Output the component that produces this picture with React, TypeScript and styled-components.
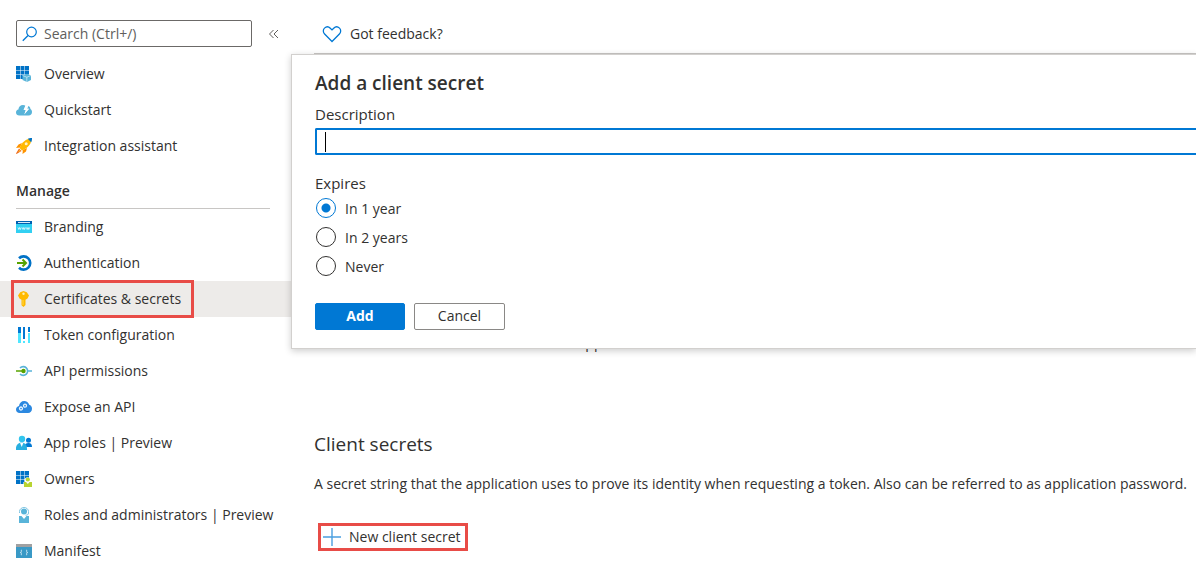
import React from "react";
import styled, { createGlobalStyle } from "styled-components";

const GlobalStyle = createGlobalStyle`
  *, *::before, *::after { box-sizing: border-box; }
  body { margin: 0; background: #fff; color: #323130; }
  body, button, input {
    font-family: "Open Sans", "Noto Sans", sans-serif;
    font-size: 14px;
    line-height: 20px;
  }
`;

const Page = styled.div`
  display: flex;
  height: 100vh;
  overflow: hidden;
`;

const Sidebar = styled.nav`
  flex: 0 0 291px;
  display: flex;
  flex-direction: column;
`;

const SearchRow = styled.div`
  flex: none;
  display: flex;
  align-items: center;
  gap: 16px;
  padding: 20px 12px 9px 16px;
`;

const SearchBox = styled.label`
  flex: 0 0 236px;
  display: flex;
  align-items: center;
  gap: 6px;
  height: 27px;
  padding: 0 5px;
  border: 1px solid #6b6967;
  border-radius: 2px;
`;

const SearchInput = styled.input`
  flex: 1;
  min-width: 0;
  padding: 0;
  border: 0;
  outline: 0;
  background: none;
  color: #323130;
  &::placeholder { color: #605e5c; opacity: 1; }
`;

const IconButton = styled.button`
  display: flex;
  padding: 0;
  border: 0;
  background: none;
`;

const NavList = styled.ul`
  flex: none;
  margin: 0;
  padding: 0;
  list-style: none;
`;

const NavLink = styled.a<{ $selected?: boolean }>`
  display: flex;
  align-items: center;
  height: 36px;
  padding-left: 11px;
  color: inherit;
  text-decoration: none;
  white-space: nowrap;
  background: ${(p) => (p.$selected ? "#edebe9" : "transparent")};
`;

const NavContent = styled.span<{ $marked?: boolean }>`
  display: flex;
  align-items: center;
  gap: 12px;
  height: 38px;
  padding: 0 10px 0 2px;
  border: 3px solid ${(p) => (p.$marked ? "#e84c47" : "transparent")};
`;

const GroupTitle = styled.h2`
  flex: none;
  margin: 14px 22px 0 16px;
  padding: 3px 0 7px;
  border-bottom: 1px solid #c8c6c4;
  font-size: 14px;
  line-height: 20px;
  font-weight: 600;
`;

const Main = styled.main`
  position: relative;
  flex: 1;
  min-width: 0;
  margin-left: -1px;
  padding-left: 23px;
`;

const Toolbar = styled.div`
  display: flex;
  height: 54px;
  padding: 14px 8px 0;
  border-bottom: 1px solid #c8c6c4;
`;

const Command = styled.button<{ $marked?: boolean }>`
  display: flex;
  align-items: center;
  gap: 8px;
  height: ${(p) => (p.$marked ? "28px" : "40px")};
  margin-left: ${(p) => (p.$marked ? "4px" : "0")};
  padding: ${(p) => (p.$marked ? "0 4px 0 2px" : "0")};
  border: ${(p) => (p.$marked ? "3px solid #e84c47" : "0")};
  background: none;
  color: inherit;
`;

const EmptyNote = styled.p`
  margin: 0;
  padding-top: 279px;
`;

const SectionTitle = styled.h2`
  margin: 77px 0 0;
  font-size: 19px;
  line-height: 28px;
  font-weight: 400;
`;

const Intro = styled.p`
  margin: 16px 0 29px;
  white-space: nowrap;
`;

const Panel = styled.form`
  position: absolute;
  top: 54px;
  left: 0;
  right: 0;
  padding: 16px 0 18px 23px;
  border: 1px solid #d2d0ce;
  border-right: 0;
  background: #fff;
  box-shadow: 0 2px 7px rgba(0, 0, 0, 0.2);
`;

const PanelTitle = styled.h2`
  margin: 0;
  font-size: 19px;
  line-height: 24px;
  font-weight: 600;
`;

const FieldLabel = styled.label`
  display: block;
  margin: 9px 0 4px;
  font-size: 15px;
`;

const TextField = styled.div`
  display: flex;
  align-items: center;
  height: 27px;
  padding-left: 8px;
  border: 2px solid #0078d4;
  border-right: 0;
  border-radius: 2px 0 0 2px;
`;

const Caret = styled.span`
  width: 1px;
  height: 20px;
  background: #000;
`;

const TextInput = styled.input`
  flex: 1;
  min-width: 0;
  padding: 0;
  border: 0;
  outline: 0;
  background: none;
  color: #323130;
`;

const Options = styled.fieldset`
  margin: 18px 0 0;
  padding: 0;
  border: 0;
`;

const Legend = styled.legend`
  padding: 0 0 1px;
  font-size: 15px;
`;

const Option = styled.label`
  display: flex;
  align-items: center;
  gap: 9px;
  height: 29px;
`;

const Radio = styled.input`
  appearance: none;
  width: 20px;
  height: 20px;
  margin: 0 0 2px 1px;
  border: 1px solid #323130;
  border-radius: 50%;
  &:checked {
    border-color: #0078d4;
    background: radial-gradient(circle, #0078d4 4px, transparent 5px);
  }
`;

const Actions = styled.div`
  display: flex;
  gap: 9px;
  margin-top: 22px;
`;

const ActionButton = styled.button<{ $primary?: boolean }>`
  width: ${(p) => (p.$primary ? "90px" : "91px")};
  height: 27px;
  padding: 0 0 2px;
  border: 1px solid ${(p) => (p.$primary ? "#0078d4" : "#8a8886")};
  border-radius: 2px;
  background: ${(p) => (p.$primary ? "#0078d4" : "#fff")};
  color: ${(p) => (p.$primary ? "#fff" : "#323130")};
  font-weight: ${(p) => (p.$primary ? 700 : 400)};
`;

const Icon = ({ size = 16, children }: { size?: number; children: React.ReactNode }) => (
  <svg width={size} height={size} viewBox={`0 0 ${size} ${size}`} fill="none" aria-hidden="true">
    {children}
  </svg>
);

const gridPath =
  "M0 0h4v4H0zM4.5 0h4v4h-4zM9 0h4v4H9zM0 4.500h4v4H0zM4.500 4.500h4v4h-4zM9 4.500h4v4H9zM0 9h4v4H0zM4.500 9h4v4h-4z";

const icons = {
  overview: (
    <Icon>
      <path d={gridPath} fill="#0072c6" />
      <path d="M6.500 9.500l4.500-1.700 4 1.700v4.500l-4 2-4.500-2z" fill="#59b4d9" />
      <path d="M6.500 9.500l4.300 1.700 4.200-1.700M10.800 11.200V16" stroke="#d5edf7" strokeWidth=".7" />
    </Icon>
  ),
  quickstart: (
    <Icon>
      <path d="M3.300 13.500C1.400 13.500 0 12.300 0 10.500c0-1.500 1-2.700 2.400-2.900C2.500 5 4.500 3 7 3c1 0 1.900.3 2.600.8L8 8h2L8.500 12 13 7h-2l1.400-3c1.300.5 2 1.600 2 3 1 .6 1.600 1.700 1.600 3 0 2-1.400 3.500-3.300 3.500z" fill="#59b4d9" />
      <path d="M10 2L7.500 8h2.200l-1.400 4.500L13 6.500h-2L12.700 2z" fill="#fff" />
    </Icon>
  ),
  rocket: (
    <Icon>
      <path d="M6 5L2.500 6.500 0 10l4-.5zM11 10l-1 3.500L6.500 16l.3-4z" fill="#ff9300" />
      <path d="M15.500.5C11 .5 7.500 3 5 7l-1.500 3 2.500 2.500L9 11c4-2.500 6.500-6 6.500-10.500z" fill="#ffb900" />
      <path d="M16 0c-2 0-3 .3-4.200.8l3.400 3.400C15.800 3 16 1.900 16 0z" fill="#0072c6" />
      <circle cx="10.200" cy="5.800" r="1.500" fill="#fff3c4" />
      <path d="M3 10.500L0 15.500l.5.500L5.500 13z" fill="#ef6c1a" />
      <path d="M3.500 12L2 14.200 4.500 13z" fill="#ffc83d" />
    </Icon>
  ),
  branding: (
    <Icon>
      <path d="M0 2h16v3H0z" fill="#0060b0" />
      <path d="M2 3h12v1H2z" fill="#d8ecfa" />
      <path d="M0 5h16v9H0z" fill="#32d0f2" />
      <path d="M2 8.500l.8 2 .8-2 .8 2 .8-2m1 0l.8 2 .8-2 .8 2 .8-2m1 0l.8 2 .8-2 .8 2 .8-2" stroke="#fff" strokeWidth=".7" />
    </Icon>
  ),
  authentication: (
    <Icon>
      <path d="M3 3.300A6.600 6.600 0 1 1 3 12.700" stroke="#0072c6" strokeWidth="2.600" />
      <path d="M1 8h9M6.500 4.500L10 8l-3.500 3.500" stroke="#57a300" strokeWidth="2" />
    </Icon>
  ),
  key: (
    <Icon>
      <path d="M7.500 0l3.300 1.300L13 4.500l-1.500 3-2 1.200V14l-2 2-2-1.800V8.700l-2-1.200-1.500-3 2.200-3.200z" fill="#ffb900" />
      <circle cx="7.500" cy="2.800" r="1.200" fill="#fff0b0" />
      <path d="M7 9v5" stroke="#ffd84a" />
    </Icon>
  ),
  token: (
    <Icon>
      <path d="M2 0h3v6H2zM7 0h2v12H7zM12 0h2v5h-2z" fill="#0078d4" />
      <path d="M2 6h3v10H2zM7 14h2v2H7zM12 6h2v10h-2z" fill="#50e6ff" />
    </Icon>
  ),
  permissions: (
    <Icon>
      <path d="M4 5a4.400 4.400 0 1 1 0 6M12 8h4" stroke="#59b4d9" strokeWidth="1.600" />
      <path d="M0 8h6" stroke="#57a300" strokeWidth="1.500" />
      <circle cx="7.500" cy="8" r="2.200" fill="#57a300" />
    </Icon>
  ),
  expose: (
    <Icon>
      <path d="M3.700 14C1.500 14 0 12.500 0 10.500 0 8.700 1.200 7.300 3 7c.4-2.900 2.400-5 5.200-5 2.400 0 4.300 1.500 5 3.800C15 6.200 16 7.800 16 9.700c0 2.500-1.600 4.300-4 4.300z" fill="#2b88e0" />
      <circle cx="5" cy="9.500" r="1.500" stroke="#e8f4ff" strokeWidth="1.300" />
      <circle cx="9" cy="6.700" r="1.500" stroke="#e8f4ff" strokeWidth="1.300" />
    </Icon>
  ),
  roles: (
    <Icon>
      <circle cx="12.500" cy="5.300" r="2.500" fill="#0078d4" />
      <path d="M8.500 12c0-2.500 1.500-4 4-4s3.500 1.500 3.500 4z" fill="#0078d4" />
      <circle cx="6" cy="4" r="3.200" fill="#32c5ed" />
      <path d="M0 15v-2c0-3 2.500-5.500 5.700-5.500s5.300 2.500 5.300 6V15z" fill="#28afe0" />
      <path d="M4 7.700L5.700 12l1.700-4.300z" fill="#fff" />
    </Icon>
  ),
  owners: (
    <Icon>
      <path d={gridPath} fill="#0072c6" />
      <path d="M7.500 16v-5H9a3 3 0 1 1 5 0h2v5z" fill="#fff" />
      <circle cx="11.800" cy="8.500" r="2.100" fill="#b8d432" />
      <path d="M8 16v-5h2l1.800 2 1.800-2H16v5z" fill="#b8d432" />
    </Icon>
  ),
  admins: (
    <Icon>
      <circle cx="8" cy="4.500" r="3" fill="#59b4d9" />
      <path d="M3.500 6V4.500a4.500 4 0 0 1 9 0V6c0 1.500-1 2.200-3 2.200" stroke="#7fc5e2" />
      <path d="M3 16V9h2.500L8 12l2.500-3H13v7z" fill="#59b4d9" />
    </Icon>
  ),
  manifest: (
    <Icon>
      <path d="M0 1h16v3H0z" fill="#a0a1a2" />
      <path d="M0 4h16v11H0z" fill="#3999c6" />
      <path d="M6 7c-1 0-.7 1-.7 1.700 0 .6-.3.8-.8.8.5 0 .8.200.8.800 0 .700-.3 1.700.7 1.700M10 7c1 0 .7 1 .7 1.700 0 .600.300.800.800.800-.5 0-.8.200-.8.800 0 .700.300 1.700-.7 1.700" stroke="#d5edf7" />
    </Icon>
  ),
};

type Item = { label: string; icon: keyof typeof icons; selected?: boolean };

const general: Item[] = [
  { label: "Overview", icon: "overview" },
  { label: "Quickstart", icon: "quickstart" },
  { label: "Integration assistant", icon: "rocket" },
];

const manage: Item[] = [
  { label: "Branding", icon: "branding" },
  { label: "Authentication", icon: "authentication" },
  { label: "Certificates & secrets", icon: "key", selected: true },
  { label: "Token configuration", icon: "token" },
  { label: "API permissions", icon: "permissions" },
  { label: "Expose an API", icon: "expose" },
  { label: "App roles | Preview", icon: "roles" },
  { label: "Owners", icon: "owners" },
  { label: "Roles and administrators | Preview", icon: "admins" },
  { label: "Manifest", icon: "manifest" },
];

const Nav = ({ items }: { items: Item[] }) => (
  <NavList>
    {items.map((item) => (
      <li key={item.label}>
        <NavLink href="#" $selected={item.selected} aria-current={item.selected ? "page" : undefined}>
          <NavContent $marked={item.selected}>
            {icons[item.icon]}
            {item.label}
          </NavContent>
        </NavLink>
      </li>
    ))}
  </NavList>
);

export default function App() {
  return (
    <>
      <GlobalStyle />
      <Page>
        <Sidebar>
          <SearchRow>
            <SearchBox>
              <Icon>
                <circle cx="9.500" cy="6" r="4.800" stroke="#0078d4" strokeWidth="1.200" />
                <path d="M6 9.500L.8 14.800" stroke="#0078d4" strokeWidth="1.300" />
              </Icon>
              <SearchInput type="search" aria-label="Search" placeholder="Search (Ctrl+/)" />
            </SearchBox>
            <IconButton type="button" aria-label="Collapse menu">
              <Icon size={12}>
                <path d="M5.500 2L1.500 6l4 4M10 2L6 6l4 4" stroke="#605e5c" />
              </Icon>
            </IconButton>
          </SearchRow>
          <Nav items={general} />
          <GroupTitle>Manage</GroupTitle>
          <Nav items={manage} />
        </Sidebar>
        <Main>
          <Toolbar>
            <Command type="button">
              <Icon size={20}>
                <path d="M10 17.500L2.600 10C.9 8.200.9 5.600 2.500 4.100c1.700-1.600 4.200-1.500 5.800.1L10 5.900l1.700-1.700c1.600-1.600 4.100-1.700 5.800-.1 1.600 1.500 1.600 4.100-.1 5.900z" stroke="#0078d4" strokeWidth="1.300" />
              </Icon>
              Got feedback?
            </Command>
          </Toolbar>
          <EmptyNote>No certificates have been added for this application.</EmptyNote>
          <SectionTitle>Client secrets</SectionTitle>
          <Intro>
            A secret string that the application uses to prove its identity when requesting a token. Also can be
            referred to as application password.
          </Intro>
          <Command type="button" $marked>
            <Icon size={18}>
              <path d="M9 0v18M0 9h18" stroke="#4a9fe0" strokeWidth="1.400" />
            </Icon>
            New client secret
          </Command>
          <Panel>
            <PanelTitle>Add a client secret</PanelTitle>
            <FieldLabel htmlFor="description">Description</FieldLabel>
            <TextField>
              <Caret />
              <TextInput id="description" type="text" />
            </TextField>
            <Options>
              <Legend>Expires</Legend>
              <Option>
                <Radio type="radio" name="expires" defaultChecked />
                In 1 year
              </Option>
              <Option>
                <Radio type="radio" name="expires" />
                In 2 years
              </Option>
              <Option>
                <Radio type="radio" name="expires" />
                Never
              </Option>
            </Options>
            <Actions>
              <ActionButton type="button" $primary>
                Add
              </ActionButton>
              <ActionButton type="button">Cancel</ActionButton>
            </Actions>
          </Panel>
        </Main>
      </Page>
    </>
  );
}
